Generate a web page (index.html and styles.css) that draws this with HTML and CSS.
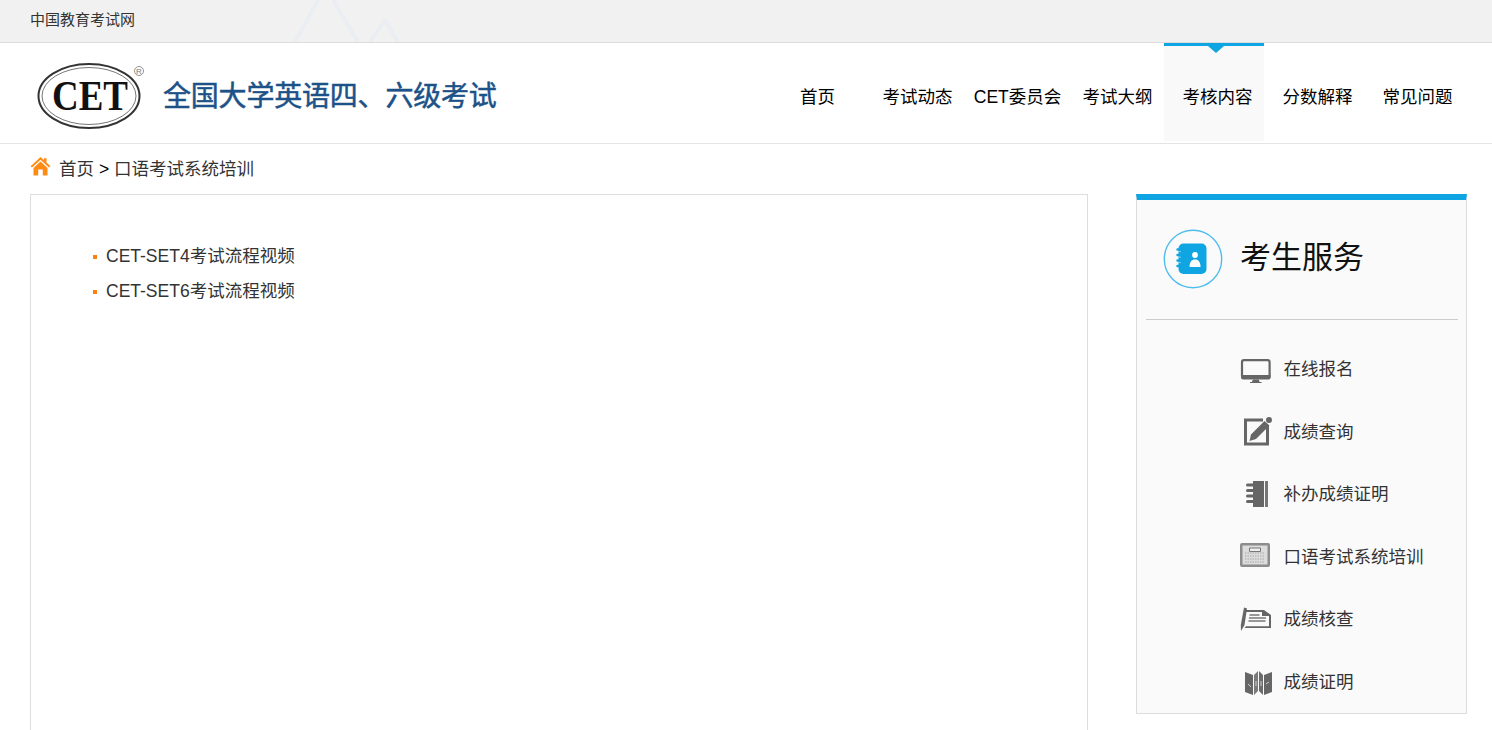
FILE: index.html
```html
<!DOCTYPE html>
<html lang="zh-CN">
<head>
  <meta charset="UTF-8" />
  <title>口语考试系统培训</title>
  <link rel="stylesheet" href="styles.css">
</head>
<body>
  <div class="topbar">
    <a class="toplink">中国教育考试网</a>
    <svg class="peaks" width="130" height="42" viewBox="0 0 130 42">
      <path d="M5 42L28 0M43 0L68 42M80 42L95 20L108 42" fill="none" stroke="#eaedf4" stroke-width="3.5" stroke-linejoin="round" />
    </svg>
  </div>

  <div class="header">
    <div class="logo">
      <svg class="logo-mark" width="118" height="70" viewBox="0 0 118 70">
        <ellipse cx="59" cy="37" rx="50.500" ry="32" fill="#fff" stroke="#333" stroke-width="2" />
        <ellipse cx="59" cy="37" rx="47" ry="28.500" fill="none" stroke="#777" stroke-width="1" />
        <text x="60" y="51" class="logo-cet" text-anchor="middle" textLength="76" lengthAdjust="spacingAndGlyphs">CET</text>
        <circle cx="109" cy="12" r="4.500" fill="none" stroke="#888" stroke-width="0.900" />
        <text x="109" y="15" class="logo-r" text-anchor="middle">R</text>
      </svg>
      <span class="logo-title">全国大学英语四、六级考试</span>
    </div>
    <ul class="nav">
      <li>首页</li>
      <li>考试动态</li>
      <li>CET委员会</li>
      <li>考试大纲</li>
      <li class="active">考核内容</li>
      <li>分数解释</li>
      <li>常见问题</li>
    </ul>
  </div>

  <div class="crumb">
    <svg width="21" height="20" viewBox="0 0 21 20">
      <path d="M10.500 1L0.600 10.200L2 11.600L10.500 3.800L19 11.600L20.400 10.200L16.500 6.500V2.200H14V4.200Z" fill="#ff8a14" />
      <path d="M10.500 5.500L3.500 12V19.500H8.200V13.500H12.800V19.500H17.500V12Z" fill="#ff8a14" />
    </svg>
    <span>首页 <b>&gt;</b> 口语考试系统培训</span>
  </div>

  <div class="content">
    <div class="main">
      <ul class="videos">
        <li>CET-SET4考试流程视频</li>
        <li>CET-SET6考试流程视频</li>
      </ul>
    </div>

    <div class="side">
      <div class="side-head">
        <svg width="60" height="60" viewBox="0 0 60 60">
          <circle cx="30" cy="30" r="28.700" fill="none" stroke="#4fbdec" stroke-width="1.400" />
          <rect x="15.500" y="14.500" width="28" height="30.500" rx="5" fill="#0ea5e2" />
          <path d="M14.500 20.500h3M14.500 26h3M14.500 31.500h3M14.500 37h3" stroke="#0ea5e2" stroke-width="2.400" stroke-linecap="round" />
          <path d="M15.500 22.600h2.500M15.500 28.100h2.500M15.500 33.600h2.500" stroke="#9ddcf5" stroke-width="0.800" />
          <circle cx="32" cy="26" r="2.900" fill="#fff" />
          <path d="M26.500 38c0-5 2-7.500 5.500-7.500s5.500 2.500 5.500 7.500z" fill="#fff" />
        </svg>
        <h2>考生服务</h2>
      </div>
      <ul class="services">
        <li>
          <svg width="32" height="28" viewBox="0 -4 32 28">
            <rect x="2" y="1.200" width="27.600" height="17.600" rx="2" fill="none" stroke="#666" stroke-width="2.200" />
            <path d="M1 16h29.600v2.500a2 2 0 0 1-2 2H3a2 2 0 0 1-2-2z" fill="#666" />
            <path d="M12.800 20.500h6l.8 2.500h2v1.500h-11.600V23h2z" fill="#666" />
          </svg>
          <span>在线报名</span>
        </li>
        <li>
          <svg width="32" height="30" viewBox="0 0 32 30">
            <path d="M23 4H5.500v24h22V10" fill="none" stroke="#666" stroke-width="3" />
            <path d="M9.500 25l1.500-6.500L24.500 5l5 4.500L16 23z" fill="#666" />
            <circle cx="29" cy="4" r="3" fill="#666" />
          </svg>
          <span>成绩查询</span>
        </li>
        <li>
          <svg width="32" height="28" viewBox="0 0 32 28">
            <rect x="13" y="1" width="11" height="26" fill="#666" />
            <rect x="25" y="1" width="3" height="26" fill="#777" />
            <path d="M7.500 5h6M7.500 10.500h6M7.500 16h6M7.500 21.500h6" stroke="#666" stroke-width="3" stroke-linecap="round" />
            <path d="M8 7.700h5M8 13.200h5M8 18.700h5" stroke="#fafafa" stroke-width="1" />
          </svg>
          <span>补办成绩证明</span>
        </li>
        <li>
          <svg width="32" height="28" viewBox="0 0 32 28">
            <rect x="0" y="1" width="30" height="24" rx="2" fill="#8c8c8c" />
            <rect x="2.500" y="3.500" width="25" height="19" fill="#dcdcdc" />
            <path d="M5 11h20M5 14h20M5 17h20M5 20h20" stroke="#a8a8a8" stroke-width="1" stroke-dasharray="1.500 1" />
            <path d="M9.500 6h11v3.500h-11z" fill="#eee" stroke="#777" stroke-width="1" />
          </svg>
          <span>口语考试系统培训</span>
        </li>
        <li>
          <svg width="32" height="28" viewBox="0 0 32 28">
            <path d="M5 5h19l7 5v13H4.500l1.500-1.800h23V11h-7V7H6z" fill="#666" />
            <path d="M9.500 10h10M9 13h17M8.500 16h17" stroke="#777" stroke-width="1.500" />
            <path d="M4 2.500L7 3.500L4.500 20L1 26L0.800 20z" fill="#666" />
          </svg>
          <span>成绩核查</span>
        </li>
        <li>
          <svg width="32" height="26" viewBox="0 0 32 26">
            <path d="M5 3l8 3v20l-8-3z" fill="#666" />
            <path d="M14 6l4-4v20l-4 4z" fill="#7b7b7b" />
            <path d="M19 2l4 4v20l-4-4z" fill="#6c6c6c" />
            <path d="M24 6l8-3v20l-8 3z" fill="#666" />
            <path d="M8 15l3 3M16 12v5M21 12v5M26 15l3-2" stroke="#cfcfcf" stroke-width="1" />
          </svg>
          <span>成绩证明</span>
        </li>
      </ul>
    </div>
  </div>
</body>
</html>
```

FILE: styles.css
```css
html, body {
  height: 730px;
  overflow: hidden;
}
body {
  margin: 0;
  font-family: "Liberation Sans", "Noto Sans CJK SC", sans-serif;
  background-color: #fff;
  color: #333;
}
ul {
  margin: 0;
  padding: 0;
  list-style: none;
}

.topbar {
  position: relative;
  height: 42px;
  padding-left: 30px;
  background-color: #f1f1f1;
  border-bottom: 1px solid #dcdcdc;
  font-size: 15px;
  line-height: 40px;
  overflow: hidden;
}
.peaks {
  position: absolute;
  left: 290px;
  top: 0;
}

.header {
  display: flex;
  justify-content: space-between;
  height: 100px;
  padding: 0 28px 0 30px;
  border-bottom: 1px solid #e4e4e4;
}
.logo {
  display: flex;
  align-items: center;
}
.logo-mark {
  margin: 2px 15px 0 0;
}
.logo-cet {
  font-family: "Liberation Serif", serif;
  font-weight: bold;
  font-size: 42px;
  fill: #111;
}
.logo-r {
  font-size: 8px;
  fill: #777;
}
.logo-title {
  padding-top: 2px;
  font-size: 28px;
  letter-spacing: -0.2px;
  color: #1d5288;
  -webkit-text-stroke: 0.5px #1d5288;
}

.nav {
  display: flex;
  height: 98px;
}
.nav li {
  position: relative;
  box-sizing: border-box;
  width: 100px;
  padding-left: 7px;
  font-size: 17.5px;
  line-height: 108px;
  text-align: center;
  color: #000;
}
.nav li.active {
  background-color: #f9f9f9;
  border-top: 3px solid #0ea5e2;
  line-height: 102px;
}
.nav li.active::after {
  content: "";
  position: absolute;
  left: 44px;
  top: 0;
  border-left: 8px solid transparent;
  border-right: 8px solid transparent;
  border-top: 7px solid #0ea5e2;
}

.crumb {
  display: flex;
  align-items: center;
  gap: 8px;
  height: 46px;
  padding: 0 0 4px 30px;
  font-size: 17.5px;
}
.crumb svg {
  margin-top: -3px;
}
.crumb b {
  font-weight: normal;
  color: #000;
}

.content {
  display: flex;
  align-items: flex-start;
  justify-content: space-between;
  padding: 0 25px 0 30px;
}
.main {
  box-sizing: border-box;
  width: 1058px;
  height: 600px;
  padding: 44px 0 0 62px;
  border: 1px solid #ddd;
}
.videos li {
  position: relative;
  padding-left: 13px;
  font-size: 17.5px;
  line-height: 35px;
}
.videos li::before {
  content: "";
  position: absolute;
  left: 0;
  top: 16px;
  width: 4px;
  height: 4px;
  background-color: #ff7f0e;
}

.side {
  box-sizing: border-box;
  width: 331px;
  height: 520px;
  background-color: #fafafa;
  border: 1px solid #ddd;
  border-top: 6px solid #0ea5e2;
}
.side-head {
  display: flex;
  align-items: center;
  gap: 17px;
  height: 119px;
  margin: 0 8px 0 9px;
  padding-left: 17px;
  border-bottom: 1px solid #ccc;
}
.side-head svg {
  margin-top: -2px;
}
.side-head h2 {
  margin: -10px 0 0;
  font-size: 31px;
  font-weight: normal;
  color: #111;
}
.services {
  padding-top: 16.3px;
}
.services li {
  display: flex;
  align-items: center;
  gap: 11.5px;
  height: 62.6px;
  padding-left: 103px;
  font-size: 17.5px;
}
.services svg {
  flex: none;
  margin-top: 2px;
}
```
